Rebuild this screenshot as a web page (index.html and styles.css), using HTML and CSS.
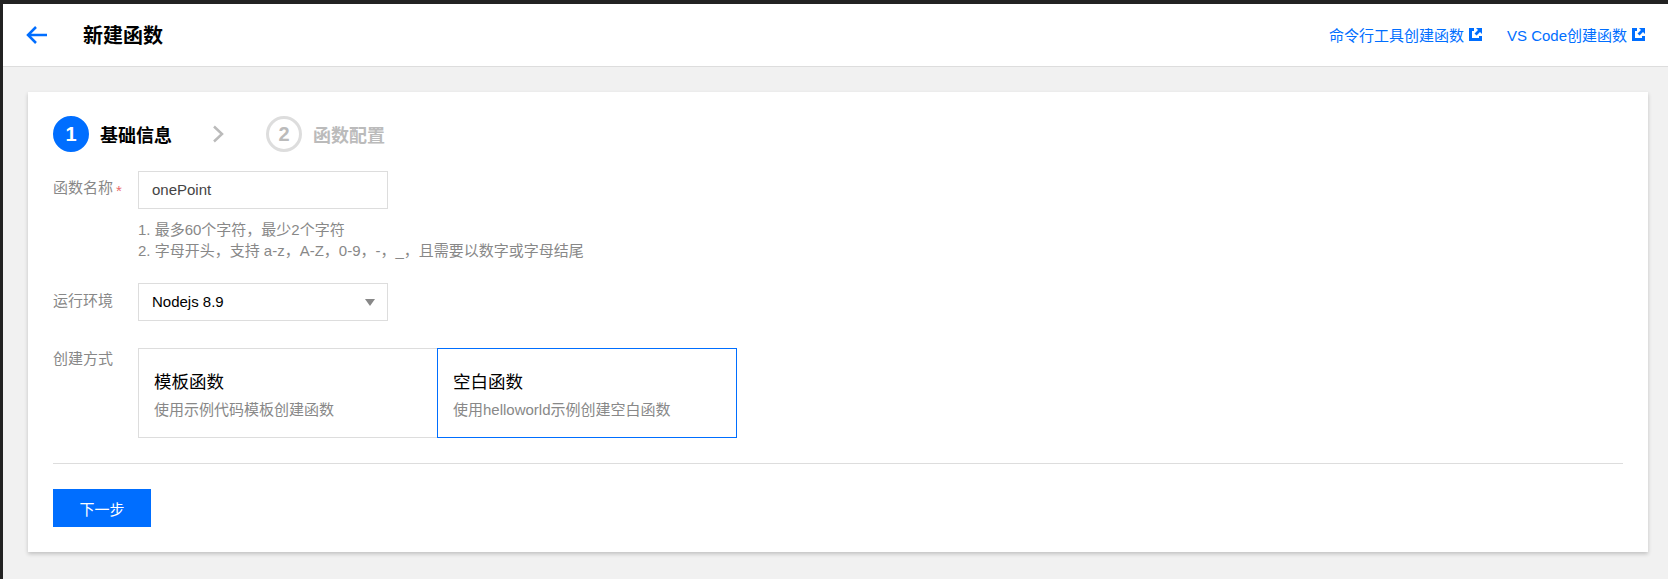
FILE: index.html
```html
<!DOCTYPE html>
<html lang="zh-CN">
<head>
    <meta charset="UTF-8">
    <title>新建函数</title>
    <link rel="stylesheet" href="styles.css">
</head>
<body>
    <div class="page">
        <header class="topbar">
            <svg class="back" width="22" height="18" viewBox="0 0 22 18"><path d="M10 1 2 9l8 8M2 9h19" fill="none" stroke="#006eff" stroke-width="2.5"/></svg>
            <h1 class="title">新建函数</h1>
            <a class="ext-link">命令行工具创建函数
                <svg width="13" height="13" viewBox="0 0 13 13"><path d="M0 0h5v3H3v7h7V8h3v5H0z" fill="#006eff"/><path d="M7 0h6v6l-2-2-3.5 3.5-2-2L9 2z" fill="#006eff"/></svg>
            </a>
            <a class="ext-link">VS Code创建函数
                <svg width="13" height="13" viewBox="0 0 13 13"><path d="M0 0h5v3H3v7h7V8h3v5H0z" fill="#006eff"/><path d="M7 0h6v6l-2-2-3.5 3.5-2-2L9 2z" fill="#006eff"/></svg>
            </a>
        </header>

        <main class="card">
            <div class="steps">
                <span class="step-num current">1</span>
                <span class="step-name current">基础信息</span>
                <svg class="step-arrow" width="12" height="18" viewBox="0 0 12 18"><path d="M2 1.5 10 9l-8 7.5" fill="none" stroke="#bbb" stroke-width="2.5"/></svg>
                <span class="step-num">2</span>
                <span class="step-name">函数配置</span>
            </div>

            <div class="row row-name">
                <label class="label label-name">函数名称<span class="req">*</span></label>
                <div>
                    <div class="field name-field">onePoint</div>
                    <p class="help">1. 最多60个字符，最少2个字符<br>2. 字母开头，支持 a-z，A-Z，0-9，-，_，且需要以数字或字母结尾</p>
                </div>
            </div>

            <div class="row row-env">
                <label class="label">运行环境</label>
                <div class="field select-field">Nodejs 8.9<i class="caret"></i></div>
            </div>

            <div class="row row-way">
                <label class="label label-top">创建方式</label>
                <div class="options">
                    <div class="option">
                        <div class="option-title">模板函数</div>
                        <div class="option-desc">使用示例代码模板创建函数</div>
                    </div>
                    <div class="option selected">
                        <div class="option-title">空白函数</div>
                        <div class="option-desc">使用helloworld示例创建空白函数</div>
                    </div>
                </div>
            </div>

            <div class="footer">
                <button class="next">下一步</button>
            </div>
        </main>
    </div>
</body>
</html>
```

FILE: styles.css
```css
html, body {
    margin: 0;
    height: 100%;
    overflow: hidden;
}
body {
    background-color: #222;
    font-family: "Liberation Sans", "Noto Sans CJK SC", sans-serif;
    font-size: 15px;
    color: #000;
}
.page {
    margin: 4px 0 0 3px;
    height: 575px;
    background-color: #f1f1f1;
    display: flow-root;
}
.topbar {
    display: flex;
    align-items: center;
    height: 60px;
    padding: 0 23px 2px;
    background-color: #fff;
    border-bottom: 1px solid #ddd;
}
.back {
    margin: 2px 35px 0 0;
}
.title {
    flex: 1;
    margin: 0;
    font-size: 20px;
    font-weight: 700;
}
.ext-link {
    display: flex;
    align-items: center;
    gap: 5px;
    margin-left: 25px;
    color: #006eff;
}
.card {
    margin: 25px 20px 0 25px;
    height: 460px;
    box-sizing: border-box;
    padding: 24px 25px 0;
    background-color: #fff;
    box-shadow: 0 2px 4px rgba(0, 0, 0, .2);
}
.steps {
    display: flex;
    align-items: center;
    height: 36px;
}
.step-num {
    width: 36px;
    height: 36px;
    box-sizing: border-box;
    border: 3px solid #ddd;
    border-radius: 50%;
    text-align: center;
    line-height: 30px;
    font-size: 20px;
    font-weight: 700;
    color: #bbb;
}
.step-num.current {
    border-color: #006eff;
    background-color: #006eff;
    color: #fff;
}
.step-name {
    margin-left: 11px;
    font-size: 18px;
    font-weight: 700;
    color: #bbb;
}
.step-name.current {
    color: #000;
}
.step-arrow {
    margin: 0 42px 0 40px;
}
.row {
    display: flex;
}
.row-name {
    margin-top: 19px;
}
.row-env {
    margin-top: 22px;
}
.row-way {
    margin-top: 27px;
}
.label {
    width: 85px;
    padding-top: 7px;
    line-height: 22px;
    color: #888;
}
.label-name {
    padding-top: 6px;
}
.label-top {
    padding-top: 0;
}
.req {
    margin-left: 3px;
    font-size: 15px;
    vertical-align: -3px;
    color: #e96a6a;
}
.field {
    width: 250px;
    height: 38px;
    box-sizing: border-box;
    border: 1px solid #ddd;
    padding: 0 13px;
    line-height: 36px;
}
.name-field {
    color: #444;
}
.select-field {
    display: flex;
    align-items: center;
    justify-content: space-between;
    padding-right: 12px;
}
.caret {
    border-top: 7px solid #888;
    border-left: 5px solid transparent;
    border-right: 5px solid transparent;
}
.help {
    margin: 10px 0 0;
    line-height: 21px;
    color: #888;
}
.options {
    display: flex;
}
.option {
    width: 300px;
    height: 90px;
    box-sizing: border-box;
    border: 1px solid #ddd;
    padding: 20px 15px 0;
}
.option.selected {
    margin-left: -1px;
    border-color: #006eff;
}
.option-title {
    font-size: 17.5px;
    line-height: 26px;
}
.option-desc {
    margin-top: 3px;
    color: #888;
}
.footer {
    margin-top: 25px;
    padding-top: 25px;
    border-top: 1px solid #ddd;
}
.next {
    display: block;
    width: 98px;
    height: 38px;
    border: 0;
    background-color: #006eff;
    color: #fff;
    font: inherit;
}
```
